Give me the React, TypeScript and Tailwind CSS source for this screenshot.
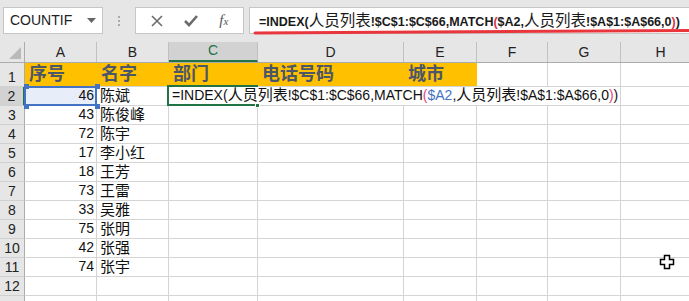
import React from 'react';

const FONT = "font-['Liberation_Sans','Noto_Sans_CJK_SC',sans-serif]";

const cols = [
  { k: 'A', w: 72 },
  { k: 'B', w: 72 },
  { k: 'C', w: 89 },
  { k: 'D', w: 146 },
  { k: 'E', w: 73 },
  { k: 'F', w: 71 },
  { k: 'G', w: 73 },
  { k: 'H', w: 80 },
];

const people: [number, string][] = [
  [46, '陈斌'],
  [43, '陈俊峰'],
  [72, '陈宇'],
  [17, '李小红'],
  [18, '王芳'],
  [73, '王雷'],
  [33, '吴雅'],
  [75, '张明'],
  [42, '张强'],
  [74, '张宇'],
];

const titles = ['序号', '名字', '部门', '电话号码', '城市'];

function RowHead({ n, h = 19, active = false }: { n: number | string; h?: number; active?: boolean }) {
  return (
    <div
      style={{ height: h }}
      className={`w-[25px] shrink-0 flex items-end justify-center pb-[1px] text-[14px] leading-[16px] text-[#222] border-b border-[#d0d0d0] ${
        active ? 'bg-[#d2d2d2] border-r-2 border-r-[#217346]' : 'bg-[#e6e6e6] border-r border-r-[#ababab]'
      }`}
    >
      {n}
    </div>
  );
}

function Cell({
  w,
  children,
  right = false,
  bg = '',
}: {
  w: number;
  children?: React.ReactNode;
  right?: boolean;
  bg?: string;
}) {
  return (
    <div
      style={{ width: w }}
      className={`h-full shrink-0 border-r border-b border-[#d4d4d4] flex items-end pb-[1px] leading-[17px] whitespace-nowrap ${
        right ? 'justify-end pr-[2px] text-[14px]' : 'pl-[3px] text-[15px]'
      } text-[#111] ${bg}`}
    >
      {children}
    </div>
  );
}

function Handle({ className }: { className: string }) {
  return <div className={`absolute w-[5px] h-[5px] bg-[#4472c4] ${className}`} />;
}

function FormulaBarText() {
  const cjk = 'text-[15.5px] font-normal';
  return (
    <span className="text-[12.5px] font-bold text-[#1a1a1a]">
      =INDEX(<span className={cjk}>人员列表</span>!$C$1:$C$66,MATCH<span className="text-[#d8334a]">(</span>$A2,
      <span className={cjk}>人员列表</span>!$A$1:$A$66,0<span className="text-[#d8334a]">)</span>)
    </span>
  );
}

function CellFormula() {
  return (
    <span className="text-[14px] relative">
      =INDEX(<span className="text-[15px]">人员列表</span>!$C$1:$C$66,MATCH<span className="text-[#e0457b]">(</span>
      <span className="text-[#4472c4]">$A2</span>,<span className="text-[15px]">人员列表</span>!$A$1:$A$66,0
      <span className="text-[#e0457b]">)</span>)
    </span>
  );
}

export default function App() {
  return (
    <div className={`w-[689px] h-[301px] overflow-hidden bg-[#e6e6e6] relative ${FONT}`}>
      {/* toolbar */}
      <div className="h-[42px] flex items-start pt-[7px]">
        <div className="ml-[3px] w-[100px] h-[27px] bg-white border border-[#c6c6c6] flex items-center justify-between pl-[6px] pr-[6px]">
          <span className="text-[14px] text-[#222]">COUNTIF</span>
          <svg width="9" height="5" viewBox="0 0 9 5">
            <path d="M0 0 H9 L4.5 5 Z" fill="#666" />
          </svg>
        </div>
        <div className="w-[32px] h-[27px] flex flex-col items-center justify-center gap-[2px]">
          <div className="w-[2px] h-[2px] bg-[#aaa]" />
          <div className="w-[2px] h-[2px] bg-[#aaa]" />
          <div className="w-[2px] h-[2px] bg-[#aaa]" />
        </div>
        <div className="w-[109px] h-[27px] bg-white border border-[#c6c6c6] flex items-center justify-around px-[4px]">
          <svg width="12" height="12" viewBox="0 0 12 12">
            <path d="M1 1 L11 11 M11 1 L1 11" stroke="#6b6b6b" strokeWidth="1.6" />
          </svg>
          <svg width="14" height="12" viewBox="0 0 14 12">
            <path d="M1 6 L5 10 L13 1" stroke="#6b6b6b" strokeWidth="2.6" fill="none" />
          </svg>
          <span className="font-['Liberation_Serif',serif] italic text-[15px] text-[#555] leading-none">
            f<span className="text-[11px]">x</span>
          </span>
        </div>
        <div className="ml-[5px] flex-1 h-[27px] bg-white border border-[#c6c6c6] border-r-0 relative flex items-center pl-[9px] whitespace-nowrap">
          <FormulaBarText />
          <svg className="absolute left-[3px] top-[20px]" width="440" height="8" viewBox="0 0 440 8">
            <path d="M2 5 Q200 4.5 437 2.5" stroke="#e8363c" strokeWidth="3" strokeLinecap="round" fill="none" />
          </svg>
        </div>
      </div>

      {/* column headers */}
      <div className="h-[21px] flex border-b border-[#ababab]">
        <div className="w-[25px] shrink-0 border-r border-[#ababab] relative">
          <svg className="absolute right-[3px] bottom-[3px]" width="12" height="12" viewBox="0 0 12 12">
            <path d="M12 0 V12 H0 Z" fill="#b9b9b9" />
          </svg>
        </div>
        {cols.map((c) => (
          <div
            key={c.k}
            style={{ width: c.w }}
            className={`shrink-0 flex items-end justify-center pb-[2px] text-[14px] leading-[16px] text-[#222] border-r border-[#c0c0c0] ${
              c.k === 'C' ? 'bg-[#d2d2d2] border-b-2 border-b-[#217346] text-[#217346]' : ''
            }`}
          >
            {c.k}
          </div>
        ))}
      </div>

      {/* row 1 */}
      <div className="h-[24px] flex bg-white">
        <RowHead n={1} h={24} />
        {titles.map((t, i) => (
          <div
            key={t}
            style={{ width: cols[i].w }}
            className="h-full shrink-0 bg-[#ffc000] border-b border-[#d4d4d4] flex items-end pl-[4px] pb-[1px] text-[18px] leading-[22px] font-bold text-[#4c5669] whitespace-nowrap"
          >
            {t}
          </div>
        ))}
        <Cell w={71} />
        <Cell w={73} />
        <Cell w={80} />
      </div>

      {/* row 2 */}
      <div className="h-[19px] flex bg-white">
        <RowHead n={2} active />
        <div className="relative">
          <Cell w={72} right bg="bg-[#e8eef9]">
            {people[0][0]}
          </Cell>
          <div className="absolute left-[-1px] top-[-1px] w-[73px] h-[20px] border-2 border-[#4472c4]" />
          <Handle className="left-[-1px] top-[-3px]" />
          <Handle className="right-[-3px] top-[-3px]" />
          <Handle className="left-[-1px] bottom-[-3px]" />
          <Handle className="right-[-3px] bottom-[-3px]" />
        </div>
        <Cell w={72}>{people[0][1]}</Cell>
        <div className="w-[452px] h-full shrink-0 border-r border-b border-[#d4d4d4] relative flex items-end pl-[3px] pb-[1px] leading-[17px] whitespace-nowrap text-[#111]">
          <div className="absolute left-[-2px] top-[-2px] w-[91px] h-[21px] border-2 border-r-0 border-[#217346]" />
          <div className="absolute left-[86px] top-[16px] w-[5px] h-[5px] bg-[#217346] border border-white" />
          <CellFormula />
        </div>
        <Cell w={80} />
      </div>

      {/* rows 3-13 */}
      {Array.from({ length: 11 }).map((_, r) => {
        const p = people[r + 1];
        return (
          <div key={r} className="h-[19px] flex bg-white">
            <RowHead n={r + 3 < 13 ? r + 3 : ''} />
            {cols.map((c, i) => (
              <Cell key={c.k} w={c.w} right={i === 0}>
                {p && i === 0 ? p[0] : p && i === 1 ? p[1] : null}
              </Cell>
            ))}
          </div>
        );
      })}

      {/* mouse cursor */}
      <svg className="absolute left-[659px] top-[254px]" width="16" height="16" viewBox="0 0 16 16">
        <path
          d="M5.5 1.5 H10.5 V5.5 H14.5 V10.5 H10.5 V14.5 H5.5 V10.5 H1.5 V5.5 H5.5 Z"
          fill="white"
          stroke="black"
          strokeWidth="1.5"
        />
      </svg>
    </div>
  );
}
